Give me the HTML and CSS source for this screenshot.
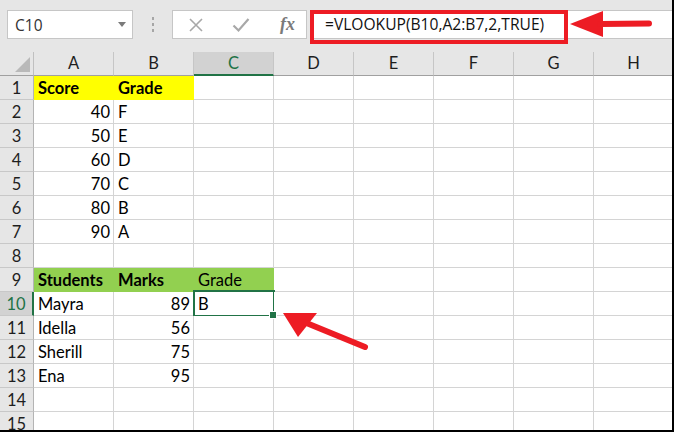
FILE: index.html
```html
<!DOCTYPE html>
<html>
<head>
<meta charset="utf-8">
<link rel="stylesheet" href="styles.css">
</head>
<body>
<div class="frame">
  <div class="toolbar">
    <div class="namebox"><span class="ref">C10</span><span class="dd"></span></div>
    <div class="sep"><i></i><i></i><i></i></div>
    <div class="iconbox">
      <svg class="ico" width="16" height="16" viewBox="0 0 16 16"><path d="M2 2 L14 14 M14 2 L2 14" stroke="#a8a8a8" stroke-width="1.6" fill="none"/></svg>
      <svg class="ico" width="18" height="16" viewBox="0 0 18 16"><path d="M1.5 8.5 L6.5 13.5 L16.5 2" stroke="#a8a8a8" stroke-width="2.2" fill="none"/></svg>
      <span class="fx">fx</span>
    </div>
    <div class="fbar">=VLOOKUP(B10,A2:B7,2,TRUE)</div>
  </div>

  <div class="sheet">
    <div class="corner"><span class="tri"></span></div>
    <div class="ch">A</div><div class="ch">B</div><div class="ch sel">C</div><div class="ch">D</div><div class="ch">E</div><div class="ch">F</div><div class="ch">G</div><div class="ch">H</div>

    <div class="rh">1</div><div class="c yellow b">Score</div><div class="c yellow b">Grade</div><div class="c"></div><div class="c"></div><div class="c"></div><div class="c"></div><div class="c"></div><div class="c"></div>
    <div class="rh">2</div><div class="c num">40</div><div class="c">F</div><div class="c"></div><div class="c"></div><div class="c"></div><div class="c"></div><div class="c"></div><div class="c"></div>
    <div class="rh">3</div><div class="c num">50</div><div class="c">E</div><div class="c"></div><div class="c"></div><div class="c"></div><div class="c"></div><div class="c"></div><div class="c"></div>
    <div class="rh">4</div><div class="c num">60</div><div class="c">D</div><div class="c"></div><div class="c"></div><div class="c"></div><div class="c"></div><div class="c"></div><div class="c"></div>
    <div class="rh">5</div><div class="c num">70</div><div class="c">C</div><div class="c"></div><div class="c"></div><div class="c"></div><div class="c"></div><div class="c"></div><div class="c"></div>
    <div class="rh">6</div><div class="c num">80</div><div class="c">B</div><div class="c"></div><div class="c"></div><div class="c"></div><div class="c"></div><div class="c"></div><div class="c"></div>
    <div class="rh">7</div><div class="c num">90</div><div class="c">A</div><div class="c"></div><div class="c"></div><div class="c"></div><div class="c"></div><div class="c"></div><div class="c"></div>
    <div class="rh">8</div><div class="c"></div><div class="c"></div><div class="c"></div><div class="c"></div><div class="c"></div><div class="c"></div><div class="c"></div><div class="c"></div>
    <div class="rh">9</div><div class="c green b">Students</div><div class="c green b">Marks</div><div class="c green">Grade</div><div class="c"></div><div class="c"></div><div class="c"></div><div class="c"></div><div class="c"></div>
    <div class="rh sel">10</div><div class="c">Mayra</div><div class="c num">89</div><div class="c active">B<span class="handle"></span></div><div class="c"></div><div class="c"></div><div class="c"></div><div class="c"></div><div class="c"></div>
    <div class="rh">11</div><div class="c">Idella</div><div class="c num">56</div><div class="c"></div><div class="c"></div><div class="c"></div><div class="c"></div><div class="c"></div><div class="c"></div>
    <div class="rh">12</div><div class="c">Sherill</div><div class="c num">75</div><div class="c"></div><div class="c"></div><div class="c"></div><div class="c"></div><div class="c"></div><div class="c"></div>
    <div class="rh">13</div><div class="c">Ena</div><div class="c num">95</div><div class="c"></div><div class="c"></div><div class="c"></div><div class="c"></div><div class="c"></div><div class="c"></div>
    <div class="rh">14</div><div class="c"></div><div class="c"></div><div class="c"></div><div class="c"></div><div class="c"></div><div class="c"></div><div class="c"></div><div class="c"></div>
    <div class="rh">15</div><div class="c"></div><div class="c"></div><div class="c"></div><div class="c"></div><div class="c"></div><div class="c"></div><div class="c"></div><div class="c"></div>
  </div>

  <div class="callout"></div>
  <svg class="arrows" width="674" height="432" viewBox="0 0 674 432">
    <polygon points="570,24 603,11 603,37" fill="#ed1c24"/>
    <line x1="600" y1="24" x2="649" y2="23.5" stroke="#ed1c24" stroke-width="6" stroke-linecap="round"/>
    <polygon points="283,313 317,313 298,337" fill="#ed1c24"/>
    <line x1="304" y1="322" x2="365" y2="347" stroke="#ed1c24" stroke-width="6" stroke-linecap="round"/>
  </svg>
</div>
</body>
</html>
```
FILE: styles.css
```css
html, body {
  margin: 0;
  padding: 0;
  background: #fff;
}
.frame {
  position: relative;
  width: 674px;
  height: 432px;
  box-sizing: border-box;
  border-right: 2px solid #000;
  border-bottom: 2px solid #000;
  overflow: hidden;
  background: #e6e6e6;
}
.toolbar {
  height: 52px;
  box-sizing: border-box;
  padding-top: 10px;
  display: flex;
  align-items: flex-start;
  font-family: "Open Sans", "Noto Sans", sans-serif;
}
.namebox {
  margin-left: 7px;
  width: 126px;
  height: 29px;
  box-sizing: border-box;
  border: 1px solid #c6c6c6;
  background: #fff;
  display: flex;
  align-items: center;
  justify-content: space-between;
  padding: 0 6px 0 7px;
  font-size: 15.5px;
  color: #333;
}
.dd {
  width: 0;
  height: 0;
  border-left: 4px solid transparent;
  border-right: 4px solid transparent;
  border-top: 5px solid #7a7a7a;
}
.sep {
  width: 39px;
  height: 29px;
  display: flex;
  flex-direction: column;
  align-items: center;
  justify-content: center;
  gap: 3px;
}
.sep i {
  display: block;
  width: 2px;
  height: 3px;
  background: #a6a6a6;
}
.iconbox {
  width: 135px;
  height: 29px;
  box-sizing: border-box;
  border: 1px solid #c6c6c6;
  background: #fff;
  display: flex;
  align-items: center;
  padding-left: 15px;
  gap: 28px;
}
.ico {
  display: block;
}
.fx {
  font-family: "Liberation Serif", "DejaVu Serif", serif;
  font-style: italic;
  font-weight: bold;
  font-size: 18px;
  color: #7a7a7a;
  margin-left: 2px;
}
.fbar {
  margin-left: 3px;
  flex: 1;
  height: 29px;
  box-sizing: border-box;
  border-top: 1px solid #c6c6c6;
  border-bottom: 1px solid #c6c6c6;
  border-left: 1px solid #c6c6c6;
  background: #fff;
  padding-left: 14px;
  font-size: 15.6px;
  line-height: 27px;
  color: #111;
}
.sheet {
  width: 674px;
  display: grid;
  grid-template-columns: 34px repeat(8, 80px);
  grid-auto-rows: 24px;
  font-family: "Lato", "Liberation Sans", sans-serif;
  font-size: 16.5px;
  color: #000;
}
.corner {
  position: relative;
  background: #e6e6e6;
  border-right: 1px solid #c0c0c0;
  border-bottom: 1px solid #a0a0a0;
  box-sizing: border-box;
}
.tri {
  position: absolute;
  right: 3px;
  bottom: 3px;
  width: 0;
  height: 0;
  border-left: 15px solid transparent;
  border-bottom: 15px solid #b9b9b9;
}
.ch {
  background: #e6e6e6;
  box-sizing: border-box;
  border-right: 1px solid #c6c6c6;
  border-bottom: 1px solid #a0a0a0;
  text-align: center;
  line-height: 23px;
  color: #1e1e1e;
}
.ch.sel {
  background: #d2d2d2;
  color: #217346;
  border-bottom: 2px solid #217346;
}
.rh {
  background: #e6e6e6;
  box-sizing: border-box;
  border-right: 1px solid #b4b4b4;
  border-bottom: 1px solid #c8c8c8;
  text-align: center;
  line-height: 25px;
  color: #1e1e1e;
}
.rh.sel {
  background: #d2d2d2;
  color: #217346;
  border-right: 2px solid #217346;
}
.c {
  position: relative;
  background: #fff;
  box-sizing: border-box;
  border-right: 1px solid #d4d4d4;
  border-bottom: 1px solid #d4d4d4;
  padding: 0 4px;
  line-height: 25px;
  white-space: nowrap;
}
.c.num {
  text-align: right;
  padding-right: 3px;
}
.c.b {
  font-weight: bold;
}
.c.yellow {
  background: #ffff00;
  border-color: #ffff00;
}
.c.green {
  background: #92d050;
  border-color: #92d050;
}
.c.active::after {
  content: "";
  position: absolute;
  left: -1px;
  top: -2px;
  right: -2px;
  bottom: -2px;
  border: 2px solid #217346;
}
.handle {
  position: absolute;
  right: -4px;
  bottom: -4px;
  width: 6px;
  height: 6px;
  background: #217346;
  border: 1px solid #fff;
  z-index: 2;
}
.callout {
  position: absolute;
  left: 310px;
  top: 10px;
  width: 258px;
  height: 34px;
  box-sizing: border-box;
  border: 4px solid #ed1c24;
}
.arrows {
  position: absolute;
  left: 0;
  top: 0;
  pointer-events: none;
}
```
